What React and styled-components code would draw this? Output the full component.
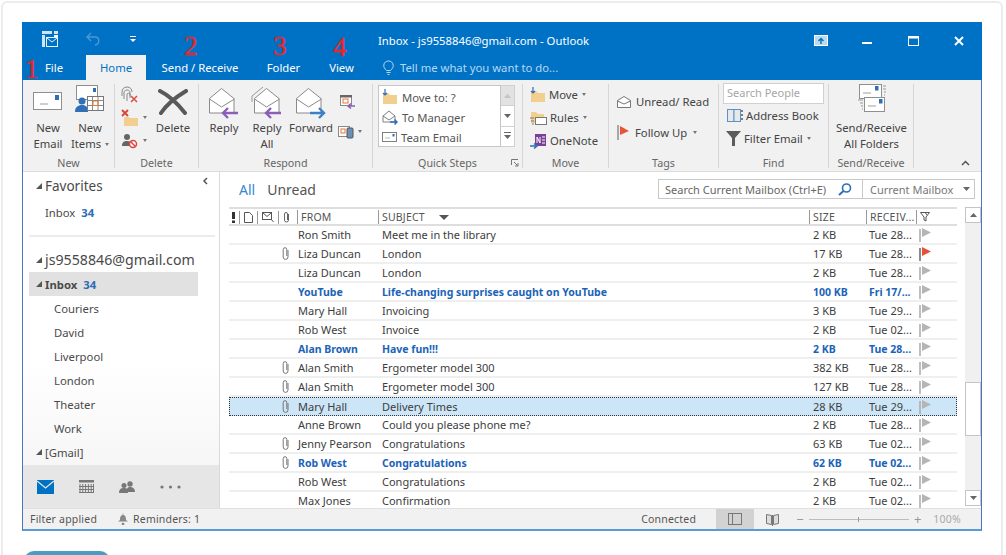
import React from "react";
import styled, { createGlobalStyle } from "styled-components";

const GlobalStyle = createGlobalStyle`
    html, body {
        margin: 0;
        height: 100%;
        background: #ffffff;
        overflow: hidden;
    }
    body {
        font-family: "Noto Sans", "Open Sans", sans-serif;
        font-size: 11px;
        color: #444444;
    }
`;

const blue = "#0072c6";
const unreadBlue = "#1b63b8";

const Card = styled.div`
    box-sizing: border-box;
    width: 1002px;
    height: 554px;
    margin: 1px 0 0 1px;
    padding: 19px 0 0 19px;
    border: 2px solid #ececec;
    border-bottom: none;
    border-radius: 6px 6px 0 0;
    overflow: hidden;
`;

const Window = styled.div`
    box-sizing: border-box;
    width: 960px;
    height: 509px;
    display: flex;
    flex-direction: column;
    border-left: 1px solid #4a74c4;
    border-right: 1px solid #4a74c4;
    border-bottom: 2px solid #5b9bd5;
    background: #ffffff;
`;

const PartialButton = styled.div`
    width: 86px;
    height: 20px;
    margin: 20px 0 0 2px;
    border-radius: 10px;
    background: #4a9cc0;
`;

/* title bar */

const TitleBar = styled.div`
    position: relative;
    height: 58px;
    margin: 0 -1px;
    background: ${blue};
    color: #ffffff;
    flex-shrink: 0;
`;

const TitleRow = styled.div`
    display: flex;
    align-items: center;
    height: 33px;
`;

const QuickAccess = styled.div`
    width: 356px;
    flex-shrink: 0;
    display: flex;
    align-items: center;
    padding-left: 19px;
    box-sizing: border-box;
    gap: 27px;
`;

const TitleText = styled.div`
    flex: 1;
    font-size: 11.3px;
    padding-top: 3px;
`;

const WindowButton = styled.div`
    width: 46px;
    display: flex;
    justify-content: center;
    padding-top: 4px;
`;

const TabRow = styled.div`
    display: flex;
    height: 25px;
    font-size: 11.3px;
`;

const Tab = styled.div`
    width: ${(p) => p.$w}px;
    display: flex;
    align-items: center;
    justify-content: center;
    background: ${(p) => (p.$active ? "#f1f1f1" : "transparent")};
    color: ${(p) => (p.$active ? blue : "#ffffff")};
`;

const TellMe = styled.div`
    display: flex;
    align-items: center;
    gap: 6px;
    padding-left: 13px;
    color: #b5d8f2;
    font-size: 11.3px;
`;

const Numeral = styled.span`
    position: absolute;
    left: ${(p) => p.$x}px;
    top: ${(p) => p.$y}px;
    font-family: "Liberation Serif", serif;
    font-size: 27px;
    line-height: 28px;
    color: #e8262a;
    -webkit-text-stroke: 0.4px #e8262a;
`;

/* ribbon */

const Ribbon = styled.div`
    display: flex;
    height: 92px;
    flex-shrink: 0;
    box-sizing: border-box;
    padding-top: 4px;
    background: #f1f1f1;
    border-bottom: 1px solid #dcdcdc;
`;

const Group = styled.div`
    box-sizing: border-box;
    width: ${(p) => p.$w}px;
    height: 84px;
    display: flex;
    flex-direction: column;
    border-right: 1px solid #d6d6d6;
    flex-shrink: 0;
`;

const GroupBody = styled.div`
    height: 71px;
    display: flex;
    padding-left: ${(p) => p.$pl || 0}px;
    padding-top: ${(p) => p.$pt || 0}px;
    box-sizing: border-box;
`;

const GroupLabel = styled.div`
    position: relative;
    height: 13px;
    line-height: 16px;
    text-align: center;
    font-size: 10.7px;
    color: #666666;
`;

const Launcher = styled.span`
    position: absolute;
    right: 3px;
    top: 4px;
    display: flex;
`;

const LargeButton = styled.div`
    width: ${(p) => p.$w}px;
    flex-shrink: 0;
    display: flex;
    flex-direction: column;
    align-items: center;
    text-align: center;
    line-height: 16px;
    font-size: 11.3px;
    color: #444444;
    white-space: nowrap;
`;

const LargeIcon = styled.div`
    height: 36px;
    width: 100%;
    display: flex;
    justify-content: center;
    align-items: ${(p) => p.$align || "center"};
`;

const Column = styled.div`
    width: ${(p) => (p.$w ? `${p.$w}px` : "auto")};
    flex-shrink: 0;
    display: flex;
    flex-direction: column;
    margin-top: ${(p) => p.$mt || 0}px;
`;

const SmallRow = styled.div`
    height: ${(p) => p.$h || 23}px;
    flex-shrink: 0;
    display: flex;
    align-items: center;
    gap: ${(p) => p.$gap ?? 3}px;
    padding-left: ${(p) => p.$pl || 0}px;
    font-size: 11.3px;
    color: #444444;
    white-space: nowrap;
`;

const Caret = styled.span`
    display: inline-block;
    vertical-align: middle;
    width: 0;
    height: 0;
    margin-left: 1px;
    border-left: 2.5px solid transparent;
    border-right: 2.5px solid transparent;
    border-top: 3px solid #777777;
`;

const QuickBox = styled.div`
    display: flex;
    margin: 1px 0 0 5px;
    height: 62px;
    box-sizing: border-box;
    width: 137px;
`;

const QuickList = styled.div`
    width: 123px;
    box-sizing: border-box;
    border: 1px solid #c6c6c6;
    background: #ffffff;
    padding: 1px 0 0 3px;
`;

const QuickRow = styled.div`
    height: 20px;
    display: flex;
    align-items: center;
    gap: 4px;
    font-size: 11.3px;
    color: #555555;
`;

const QuickScroll = styled.div`
    width: 14px;
    display: flex;
    flex-direction: column;
`;

const QuickScrollButton = styled.div`
    flex: 1;
    display: flex;
    align-items: center;
    justify-content: center;
    background: ${(p) => (p.$off ? "#e2e2e2" : "#ffffff")};
    border: 1px solid #d0d0d0;
    border-left: none;
    border-top: ${(p) => (p.$first ? "1px solid #d0d0d0" : "none")};
`;

const PeopleSearch = styled.div`
    box-sizing: border-box;
    width: 101px;
    height: 21px;
    margin: -1px 0 0 4px;
    padding-left: 3px;
    line-height: 18px;
    background: #ffffff;
    border: 1px solid #d0d0d0;
    font-size: 11px;
    color: #a6a6a6;
`;

const Collapse = styled.div`
    flex: 1;
    display: flex;
    justify-content: flex-end;
    align-items: flex-end;
    padding: 0 11px 5px 0;
`;

/* main */

const Main = styled.div`
    flex: 1;
    display: flex;
    min-height: 0;
`;

const Sidebar = styled.div`
    box-sizing: border-box;
    width: 197px;
    flex-shrink: 0;
    display: flex;
    flex-direction: column;
    border-right: 1px solid #dadada;
    background: linear-gradient(#ffffff 55%, #f3f3f3);
`;

const Folders = styled.div`
    position: relative;
    flex: 1;
    overflow: hidden;
`;

const Pin = styled.span`
    position: absolute;
    right: 11px;
    top: 5px;
    display: flex;
`;

const FolderRow = styled.div`
    height: ${(p) => p.$h || 24}px;
    display: flex;
    align-items: center;
    margin-left: ${(p) => (p.$selected ? 6 : 0)}px;
    margin-top: ${(p) => p.$mt || 0}px;
    width: ${(p) => (p.$selected ? "169px" : "auto")};
    padding-left: ${(p) => (p.$selected ? p.$indent - 6 : p.$indent)}px;
    background: ${(p) => (p.$selected ? "#e1e1e1" : "transparent")};
    font-size: ${(p) => p.$size || 11.3}px;
    font-weight: ${(p) => (p.$bold ? 700 : 400)};
    color: #4a4a4a;
    box-sizing: border-box;
`;

const Triangle = styled.span`
    width: 0;
    height: 0;
    margin-right: 3px;
    border-left: 6px solid transparent;
    border-bottom: 6px solid #555555;
`;

const Count = styled.span`
    margin-left: 6px;
    font-weight: 700;
    color: #2c6db5;
`;

const Divider = styled.div`
    height: 2px;
    margin: 9px 4px 0 6px;
    background: #ececec;
`;

const NavBar = styled.div`
    height: 43px;
    flex-shrink: 0;
    display: flex;
    align-items: center;
    background: #e6e6e6;
    padding-left: 14px;
    gap: 25px;
`;

const MailPane = styled.div`
    flex: 1;
    min-width: 0;
    display: flex;
    flex-direction: column;
    padding-left: 9px;
`;

const PaneTools = styled.div`
    height: 35px;
    flex-shrink: 0;
    display: flex;
    align-items: center;
    justify-content: space-between;
    padding: 0 6px 0 10px;
`;

const FilterTabs = styled.div`
    display: flex;
    gap: 12px;
    font-size: 14px;
`;

const FilterTab = styled.span`
    color: ${(p) => (p.$active ? "#3a86cf" : "#555555")};
`;

const SearchBar = styled.div`
    display: flex;
    height: 20px;
    box-sizing: border-box;
    border: 1px solid #c8c8c8;
    margin-top: -1px;
`;

const SearchField = styled.div`
    width: 204px;
    display: flex;
    align-items: center;
    justify-content: space-between;
    padding: 0 10px 0 6px;
    box-sizing: border-box;
    border-right: 1px solid #c8c8c8;
    font-size: 11px;
    color: #666666;
`;

const ScopeField = styled.div`
    width: 111px;
    display: flex;
    align-items: center;
    justify-content: space-between;
    padding: 0 4px 0 7px;
    box-sizing: border-box;
    font-size: 11px;
    color: #777777;
`;

const ListArea = styled.div`
    flex: 1;
    min-height: 0;
    display: flex;
    gap: 8px;
`;

const MailList = styled.div`
    width: 728px;
    overflow: hidden;
`;

const columns = "68px 81px 431px 57px 50px 41px";

const HeaderRow = styled.div`
    display: grid;
    grid-template-columns: ${columns};
    box-sizing: border-box;
    height: 19px;
    border-top: 2px solid #dedede;
    border-bottom: 2px solid #dedede;
    font-size: 10.5px;
    color: #555555;
`;

const HeaderCell = styled.div`
    display: flex;
    align-items: center;
    gap: ${(p) => p.$gap || 0}px;
    padding-left: 3px;
    letter-spacing: 0.2px;
    white-space: nowrap;
    border-left: ${(p) => (p.$first ? "none" : "1px solid #999999")};
    margin: 1px 0;
`;

const IconDivider = styled.span`
    width: 1px;
    height: 13px;
    background: #999999;
`;

const MailRow = styled.div`
    display: grid;
    grid-template-columns: ${columns};
    height: 19px;
    box-sizing: border-box;
    align-items: center;
    border-bottom: ${(p) => (p.$selected ? "none" : "2px solid #efefef")};
    outline: ${(p) => (p.$selected ? "1px dotted #333333" : "none")};
    outline-offset: -1px;
    background: ${(p) => (p.$selected ? "#cce5f7" : "transparent")};
    font-size: ${(p) => (p.$unread ? 10.5 : 11)}px;
    font-weight: ${(p) => (p.$unread ? 700 : 400)};
    color: ${(p) => (p.$unread ? unreadBlue : "#3d3d3d")};
`;

const AttachCell = styled.div`
    display: flex;
    justify-content: flex-end;
    padding-right: 7px;
`;

const MailCell = styled.div`
    padding-left: ${(p) => p.$pl}px;
    white-space: nowrap;
    overflow: hidden;
`;

const FlagCell = styled.div`
    display: flex;
    padding-left: 3px;
`;

const ScrollBar = styled.div`
    width: 16px;
    height: 299px;
    background: #f0f0f0;
    display: flex;
    flex-direction: column;
`;

const ScrollButton = styled.div`
    height: 16px;
    box-sizing: border-box;
    background: #ffffff;
    border: 1px solid #c4c4c4;
    display: flex;
    align-items: center;
    justify-content: center;
    margin-top: ${(p) => p.$mt || 0}px;
`;

const ScrollThumb = styled.div`
    box-sizing: border-box;
    height: 54px;
    margin-top: 159px;
    background: #ffffff;
    border: 1px solid #c4c4c4;
`;

/* status bar */

const StatusBar = styled.div`
    box-sizing: border-box;
    height: 21px;
    flex-shrink: 0;
    display: flex;
    align-items: center;
    background: #f1f1f1;
    border-top: 1px solid #e0e0e0;
    font-size: 10.5px;
    color: #555555;
`;

const StatusText = styled.span`
    display: flex;
    align-items: center;
    gap: 4px;
    margin-left: ${(p) => p.$ml}px;
    width: ${(p) => (p.$w ? `${p.$w}px` : "auto")};
    color: ${(p) => p.$color || "#555555"};
    letter-spacing: 0.2px;
`;

const ViewButton = styled.div`
    height: 100%;
    width: ${(p) => p.$w}px;
    display: flex;
    align-items: center;
    justify-content: center;
    background: ${(p) => (p.$active ? "#d2d2d2" : "transparent")};
`;

const ZoomSlider = styled.div`
    display: flex;
    align-items: center;
    width: 100px;
    height: 1px;
    margin: 0 5px;
    background: #bdbdbd;
    justify-content: center;
`;

const ZoomTick = styled.span`
    width: 1px;
    height: 5px;
    background: #999999;
`;

const ZoomSign = styled.span`
    font-size: 13px;
    color: #999999;
    line-height: 13px;
`;

const SortArrow = styled.span`
    width: 0;
    height: 0;
    margin-left: 14px;
    border-left: 5px solid transparent;
    border-right: 5px solid transparent;
    border-top: 5px solid #555555;
`;

const IconSlot = styled.span`
    display: flex;
    margin-left: ${(p) => p.$ml || 0}px;
    margin-top: ${(p) => p.$mt || 0}px;
`;

/* icons */

const Svg = ({ w, h, children }) => (
    <svg width={w} height={h} viewBox={`0 0 ${w} ${h}`} fill="none" style={{ display: "block", flexShrink: 0 }}>
        {children}
    </svg>
);

const AppIcon = () => (
    <Svg w={18} h={18}>
        <path d="M1 1h10v3H1zM13 1h4v3h-4zM1 5h3v12H1z" fill="#cfe4f5" />
        <rect x="5.5" y="7.5" width="11" height="9" fill="none" stroke="#e8f2fa" />
        <path d="M6 8l5 4 5-4" stroke="#e8f2fa" />
        <path d="M13 5h4v2h-4z" fill="#ffffff" />
    </Svg>
);

const UndoIcon = () => (
    <Svg w={16} h={14}>
        <path d="M5 1L1 5l4 4M1 5h8c5 0 5 7 0 8" stroke="#4c97d6" strokeWidth="1.4" />
    </Svg>
);

const QatMenu = () => (
    <Svg w={8} h={8}>
        <path d="M1 1h6v1H1z" fill="#fff" />
        <path d="M1 4h6L4 7z" fill="#fff" />
    </Svg>
);

const RestoreRibbon = () => (
    <Svg w={14} h={11}>
        <rect x="0.5" y="0.5" width="13" height="10" fill="#bcd9ef" stroke="#fff" />
        <path d="M7 9V4M4.5 6L7 3.5 9.5 6" stroke={blue} strokeWidth="1.4" />
    </Svg>
);

const MinimizeIcon = () => <Svg w={10} h={10}><path d="M0 6h10v2H0z" fill="#fff" /></Svg>;
const MaximizeIcon = () => <Svg w={11} h={10}><rect x="0.5" y="0.5" width="10" height="9" stroke="#fff" /><path d="M0 0h11v2.5H0z" fill="#fff" /></Svg>;
const CloseIcon = () => <Svg w={10} h={10}><path d="M1 1l8 8M9 1l-8 8" stroke="#fff" strokeWidth="2" /></Svg>;

const BulbIcon = () => (
    <Svg w={11} h={15}>
        <path d="M3.5 10.5C1.5 8.5 .5 7 .8 5 1.2 2.4 3 1 5.5 1s4.3 1.4 4.7 4c.3 2-.7 3.5-2.7 5.5z" stroke="#b5d8f2" />
        <path d="M3.5 12.5h4M4.5 14.5h2" stroke="#b5d8f2" />
    </Svg>
);

const NewEmailIcon = () => (
    <Svg w={30} h={20}>
        <rect x="0.5" y="0.5" width="28" height="17" fill="#fff" stroke="#8f8f8f" />
        <rect x="22" y="3" width="4" height="5" fill="#2e6fb7" />
        <path d="M7 12h8" stroke="#cfcfcf" strokeWidth="2" />
    </Svg>
);

const NewItemsIcon = () => (
    <Svg w={30} h={30}>
        <rect x="1.5" y="1.5" width="21" height="14" fill="#fff" stroke="#8f8f8f" />
        <rect x="18" y="4" width="3" height="4" fill="#2e6fb7" />
        <circle cx="7" cy="17" r="3.5" fill="#2e6fb7" />
        <path d="M0 28c0-5 3-7 7-7s6 2 6 7z" fill="#2e6fb7" />
        <rect x="12.5" y="12.5" width="16" height="14" fill="#fff" stroke="#777" />
        <path d="M12.5 16.5h16M17.5 13v13M23 13v13M13 21.5h15" stroke="#888" />
        <rect x="18" y="17" width="5" height="4.5" fill="none" stroke="#e2792c" />
    </Svg>
);

const CleanIcon = () => (
    <Svg w={18} h={17}>
        <path d="M1 10V6c0-3 2-5 5-5s5 2 5 5" stroke="#888" />
        <path d="M3 13V7c0-2 1-3 3-3s3 1 3 3v5" stroke="#888" />
        <path d="M6 15V8c0-1 3-1 3 0v2" stroke="#888" />
        <path d="M10 10l6 6M16 10l-6 6" stroke="#d9534a" strokeWidth="1.6" />
    </Svg>
);

const JunkFolderIcon = () => (
    <Svg w={18} h={18}>
        <path d="M3 8h5l1 1h8v8H3z" fill="#f3cf8f" />
        <path d="M1 1l6 6M7 1L1 7" stroke="#d9483b" strokeWidth="2" />
    </Svg>
);

const BlockIcon = () => (
    <Svg w={18} h={16}>
        <circle cx="6" cy="4" r="3" fill="#666" />
        <path d="M1 13c0-4 2-5 5-5s4 1 4 3v2z" fill="#666" />
        <circle cx="12" cy="11" r="3.5" fill="#fff" stroke="#d9483b" strokeWidth="1.5" />
        <path d="M9.5 8.5l5 5" stroke="#d9483b" strokeWidth="1.5" />
    </Svg>
);

const DeleteIcon = () => (
    <Svg w={30} h={26}>
        <path d="M2 2c8 4 18 13 25 22M28 2C18 8 9 15 3 24" stroke="#595959" strokeWidth="4" strokeLinecap="round" />
    </Svg>
);

const OpenEnvelope = ({ arrow, all, forward }) => {
    const left = all ? 3.5 : 1.5;
    return (
        <Svg w={32} h={33}>
            {all && <path d="M1 16V10L12 1" stroke="#999" />}
            <path d={`M${left} 12.5L${left + 12} 2.5l12.5 10V27H${left}z`} fill="#fff" stroke="#8a8a8a" />
            <path d={`M${left} 13L${left + 12} 21 ${left + 25} 13`} stroke="#8a8a8a" />
            {forward ? (
                <path d="M15 27h14M24 22l5 5-5 5" stroke={arrow} strokeWidth="2.4" />
            ) : (
                <path d="M30 27H15M20 22l-5 5 5 5" stroke={arrow} strokeWidth="2.4" />
            )}
        </Svg>
    );
};

const MeetingIcon = () => (
    <Svg w={15} h={14}>
        <rect x="0.5" y="0.5" width="11" height="10" fill="#fff" stroke="#888" />
        <path d="M0 0h12v2.5H0z" fill="#666" />
        <rect x="3" y="4" width="5" height="4" stroke="#e2792c" />
        <path d="M15 11H8M11 8.5L8 11l3 2.5" stroke="#8b5fb8" strokeWidth="1.5" />
    </Svg>
);

const MoreRespondIcon = () => (
    <Svg w={16} h={15}>
        <rect x="0.5" y="2.5" width="11" height="10" fill="#fff" stroke="#888" />
        <rect x="3" y="5" width="4" height="4" stroke="#e2792c" />
        <rect x="9" y="4" width="6" height="10" rx="1" fill="#6c8fb7" stroke="#555" />
    </Svg>
);

const FolderArrowIcon = () => (
    <Svg w={16} h={16}>
        <path d="M1 4h5l2 2h7v9H1z" fill="#f3cf8f" />
        <path d="M3 0v6M1 4l2 2 2-2" stroke="#2e6fb7" strokeWidth="1.2" />
    </Svg>
);

const ManagerIcon = () => (
    <Svg w={16} h={15}>
        <path d="M1 6l6-5 6 5v6H1z" fill="#fff" stroke="#808080" />
        <path d="M1 6l6 4 6-4" stroke="#808080" />
        <path d="M8 12h7M12.5 9.5L15 12l-2.5 2.5" stroke="#2e6fb7" strokeWidth="1.5" />
    </Svg>
);

const TeamEmailIcon = () => (
    <Svg w={15} h={12}>
        <rect x="0.5" y="1.5" width="14" height="9" fill="#fff" stroke="#808080" />
        <rect x="10.5" y="3" width="2" height="2.5" fill="#2e6fb7" />
        <path d="M3 7h5" stroke="#bbb" />
    </Svg>
);

const RulesIcon = () => (
    <Svg w={17} h={17}>
        <path d="M1 3h5l2 2h6v9H1z" fill="#f3cf8f" />
        <rect x="5.5" y="8.5" width="11" height="7" fill="#fff" stroke="#777" />
        <path d="M0 9h4M1 12h3M2 15h2" stroke="#777" />
    </Svg>
);

const OneNoteIcon = () => (
    <Svg w={17} h={16}>
        <rect x="5" y="1" width="11" height="12" fill="#7b3f98" />
        <path d="M7 10V4l3 6V4M12 4h3M12 7h3M12 10h3" stroke="#fff" />
        <path d="M0 13h6M4 10.5L7 13l-3 2.5" stroke="#2e6fb7" strokeWidth="1.5" />
    </Svg>
);

const UnreadIcon = () => (
    <Svg w={14} h={12}>
        <path d="M.5 4.5L7 .5l6.5 4v7H.5z" fill="#fff" stroke="#777" />
        <path d="M.5 5L7 8l6.5-3" stroke="#777" />
    </Svg>
);

const RibbonFlag = () => (
    <Svg w={13} h={15}>
        <path d="M1 0v15" stroke="#888" strokeWidth="1.4" />
        <path d="M3 1l9 5-9 4z" fill="#e8543a" />
    </Svg>
);

const BookIcon = () => (
    <Svg w={16} h={13}>
        <rect x="0.5" y="0.5" width="6.5" height="12" fill="#e8e8e8" stroke="#5a93c9" />
        <rect x="7" y="0.5" width="6.5" height="12" fill="#e8e8e8" stroke="#5a93c9" />
        <path d="M15 1v2M15 5v2M15 9v2" stroke="#555" strokeWidth="1.5" />
    </Svg>
);

const FunnelIcon = () => (
    <Svg w={15} h={15}>
        <path d="M0 0h15L9 7v8H6V7z" fill="#5c5c5c" />
    </Svg>
);

const SendAllIcon = () => (
    <Svg w={30} h={28}>
        <rect x="2.5" y="0.5" width="22" height="14" fill="#fff" stroke="#8f8f8f" />
        <rect x="18" y="2" width="3.5" height="4.5" fill="#2e6fb7" />
        <path d="M6 9h8" stroke="#cfcfcf" strokeWidth="2" />
        <path d="M26 2h3M26 5h3M27 8h2M27 11h1" stroke="#999" />
        <rect x="7.5" y="13.5" width="20" height="14" fill="#fff" stroke="#8f8f8f" />
        <rect x="22" y="15" width="3.5" height="4.5" fill="#2e6fb7" />
        <path d="M11 22h8" stroke="#cfcfcf" strokeWidth="2" />
        <path d="M1 16h5M3 19h3M4 22h2M5 25h1" stroke="#999" />
    </Svg>
);

const ChevronUp = () => <Svg w={9} h={6}><path d="M1 5l3.5-3.5L8 5" stroke="#555" strokeWidth="1.5" /></Svg>;
const PinIcon = () => <Svg w={6} h={8}><path d="M5 1L2 4l3 3" stroke="#555" strokeWidth="1.5" /></Svg>;
const MiniLauncher = () => <Svg w={8} h={8}><path d="M.5 6V.5H7M3 3l4 4M7 4v3H4" stroke="#777" /></Svg>;
const SmallTriangleUp = ({ color = "#666" }) => <Svg w={7} h={4}><path d="M0 4l3.5-4L7 4z" fill={color} /></Svg>;
const SmallTriangleDown = ({ color = "#666" }) => <Svg w={7} h={4}><path d="M0 0l3.5 4L7 0z" fill={color} /></Svg>;
const QuickMore = () => <Svg w={7} h={8}><path d="M0 0h7v1H0z" fill="#666" /><path d="M0 3h7L3.5 7z" fill="#666" /></Svg>;

const MagnifierIcon = () => (
    <Svg w={14} h={13}>
        <circle cx="8.5" cy="5" r="4" stroke="#2e6fb7" strokeWidth="1.6" />
        <path d="M5.5 8L1 12" stroke="#2e6fb7" strokeWidth="2" />
    </Svg>
);

const NavMail = () => (
    <Svg w={17} h={14}>
        <path d="M0 0h17v14H0z" fill={blue} />
        <path d="M0 1l8.5 7L17 1" stroke="#e6e6e6" strokeWidth="1.3" />
    </Svg>
);

const NavCalendar = () => (
    <Svg w={15} h={13}>
        <path d="M0 0h15v2.5H0z" fill="#777" />
        <path d="M1 4v9M3.8 4v9M6.6 4v9M9.4 4v9M12.2 4v9M14.5 4v9M0 6.5h15M0 9.5h15M0 12.5h15" stroke="#777" />
    </Svg>
);

const NavPeople = () => (
    <Svg w={16} h={12}>
        <circle cx="11" cy="3" r="2.7" fill="#777" />
        <path d="M7.5 11c0-4 1.5-5 3.5-5s5 1 5 5z" fill="#777" />
        <circle cx="5" cy="4.5" r="2.5" fill="#777" />
        <path d="M0 12c0-4 2-5 5-5s4 1 4 5z" fill="#777" />
    </Svg>
);

const NavMore = () => (
    <Svg w={21} h={4}>
        <circle cx="2" cy="2" r="1.6" fill="#777" />
        <circle cx="10.5" cy="2" r="1.6" fill="#777" />
        <circle cx="19" cy="2" r="1.6" fill="#777" />
    </Svg>
);

const ClipIcon = ({ color = "#777" }) => (
    <Svg w={8} h={15}>
        <path d="M6 4v7a2.4 2.4 0 0 1-4.8 0V3.5a1.8 1.8 0 0 1 3.6 0V10" stroke={color} />
    </Svg>
);

const SmallClipIcon = () => (
    <Svg w={7} h={12}>
        <path d="M5.5 3v6a2 2 0 0 1-4 0V3a1.5 1.5 0 0 1 3 0v6" stroke="#666" />
    </Svg>
);

const DocIcon = () => <Svg w={9} h={11}><path d="M.5.5h5l3 3v7h-8z" stroke="#555" /></Svg>;
const HeaderEnvelopeIcon = () => (
    <Svg w={12} h={11}>
        <rect x="0.5" y="0.5" width="9" height="7" stroke="#555" />
        <path d="M.5.5l4.5 4 4.5-4M9 7l2.5 3" stroke="#555" />
    </Svg>
);
const BangIcon = () => <Svg w={3} h={11}><path d="M0 0h3v7H0zM0 8.5h3V11H0z" fill="#333" /></Svg>;
const FilterHeaderIcon = () => <Svg w={10} h={10}><path d="M.5.5h9L6 5v4L4 8V5zM5 .5L7 3" stroke="#555" /></Svg>;

const FlagIcon = ({ red }) => (
    <Svg w={14} h={14}>
        <path d="M1 1v13" stroke={red ? "#666" : "#aaaaaa"} strokeWidth="1.5" />
        <path d="M3 0l9 4.5L3 9z" fill={red ? "#e8503a" : "#b5b5b5"} />
    </Svg>
);

const BellIcon = () => (
    <Svg w={12} h={12}>
        <path d="M3 7c0-3 .5-5 3-5s3 2 3 5l2 1.5H1z" fill="#888" />
        <path d="M6 0v2M5 10h2v2H5z" fill="#888" stroke="#888" strokeWidth=".5" />
    </Svg>
);

const NormalViewIcon = () => <Svg w={14} h={12}><rect x="0.5" y="0.5" width="13" height="11" stroke="#777" /><path d="M4.5 1v10" stroke="#777" /></Svg>;
const ReadingViewIcon = () => <Svg w={13} h={13}><path d="M.5 1.5l5 1v9l-5-1zM12.5 1.5l-5 1v9l5-1z" fill="#ddd" stroke="#777" /><path d="M6.5 2v11" stroke="#777" /></Svg>;

const mails = [
    { from: "Ron Smith", subject: "Meet me in the library", size: "2 KB", date: "Tue 28..." },
    { from: "Liza Duncan", subject: "London", size: "17 KB", date: "Tue 28...", clip: true, red: true },
    { from: "Liza Duncan", subject: "London", size: "2 KB", date: "Tue 28..." },
    { from: "YouTube", subject: "Life-changing surprises caught on YouTube", size: "100 KB", date: "Fri 17/...", unread: true },
    { from: "Mary Hall", subject: "Invoicing", size: "3 KB", date: "Tue 29..." },
    { from: "Rob West", subject: "Invoice", size: "2 KB", date: "Tue 02..." },
    { from: "Alan Brown", subject: "Have fun!!!", size: "2 KB", date: "Tue 28...", unread: true },
    { from: "Alan Smith", subject: "Ergometer model 300", size: "382 KB", date: "Tue 28...", clip: true },
    { from: "Alan Smith", subject: "Ergometer model 300", size: "127 KB", date: "Tue 28...", clip: true },
    { from: "Mary Hall", subject: "Delivery Times", size: "28 KB", date: "Tue 29...", clip: true, selected: true },
    { from: "Anne Brown", subject: "Could you please phone me?", size: "2 KB", date: "Tue 28..." },
    { from: "Jenny Pearson", subject: "Congratulations", size: "63 KB", date: "Tue 02...", clip: true },
    { from: "Rob West", subject: "Congratulations", size: "62 KB", date: "Tue 02...", clip: true, unread: true },
    { from: "Rob West", subject: "Congratulations", size: "2 KB", date: "Tue 02..." },
    { from: "Max Jones", subject: "Confirmation", size: "2 KB", date: "Tue 02..." },
];

const subFolders = ["Couriers", "David", "Liverpool", "London", "Theater", "Work"];

const TitleArea = () => (
    <TitleBar>
        <TitleRow>
            <QuickAccess>
                <AppIcon />
                <UndoIcon />
                <QatMenu />
            </QuickAccess>
            <TitleText>Inbox - js9558846@gmail.com - Outlook</TitleText>
            <WindowButton><RestoreRibbon /></WindowButton>
            <WindowButton><MinimizeIcon /></WindowButton>
            <WindowButton><MaximizeIcon /></WindowButton>
            <WindowButton><CloseIcon /></WindowButton>
        </TitleRow>
        <TabRow>
            <Tab $w={64}>File</Tab>
            <Tab $w={60} $active>Home</Tab>
            <Tab $w={108}>Send / Receive</Tab>
            <Tab $w={59}>Folder</Tab>
            <Tab $w={57}>View</Tab>
            <TellMe><BulbIcon />Tell me what you want to do...</TellMe>
        </TabRow>
        <Numeral $x={3} $y={33}>1</Numeral>
        <Numeral $x={162} $y={10}>2</Numeral>
        <Numeral $x={251} $y={10}>3</Numeral>
        <Numeral $x={311} $y={11}>4</Numeral>
    </TitleBar>
);

const RibbonArea = () => (
    <Ribbon>
        <Group $w={92}>
            <GroupBody $pl={2}>
                <LargeButton $w={46}>
                    <LargeIcon><NewEmailIcon /></LargeIcon>
                    <span>New<br />Email</span>
                </LargeButton>
                <LargeButton $w={38}>
                    <LargeIcon $align="flex-start"><NewItemsIcon /></LargeIcon>
                    <span>New<br />Items <Caret /></span>
                </LargeButton>
            </GroupBody>
            <GroupLabel>New</GroupLabel>
        </Group>
        <Group $w={84}>
            <GroupBody $pl={6}>
                <Column $w={31} $mt={-1}>
                    <SmallRow><CleanIcon /></SmallRow>
                    <SmallRow><JunkFolderIcon /><Caret /></SmallRow>
                    <SmallRow><BlockIcon /><Caret /></SmallRow>
                </Column>
                <LargeButton $w={42}>
                    <LargeIcon><DeleteIcon /></LargeIcon>
                    <span>Delete</span>
                </LargeButton>
            </GroupBody>
            <GroupLabel>Delete</GroupLabel>
        </Group>
        <Group $w={174}>
            <GroupBody $pl={4}>
                <LargeButton $w={42}>
                    <LargeIcon><OpenEnvelope arrow="#8b5fb8" /></LargeIcon>
                    <span>Reply</span>
                </LargeButton>
                <LargeButton $w={44}>
                    <LargeIcon><OpenEnvelope arrow="#8b5fb8" all /></LargeIcon>
                    <span>Reply<br />All</span>
                </LargeButton>
                <LargeButton $w={44}>
                    <LargeIcon><OpenEnvelope arrow="#3f7fc4" forward /></LargeIcon>
                    <span>Forward</span>
                </LargeButton>
                <Column $w={30}>
                    <SmallRow $h={34}><IconSlot $ml={7} $mt={2}><MeetingIcon /></IconSlot></SmallRow>
                    <SmallRow $h={26}><IconSlot $ml={5}><MoreRespondIcon /></IconSlot><Caret /></SmallRow>
                </Column>
            </GroupBody>
            <GroupLabel>Respond</GroupLabel>
        </Group>
        <Group $w={150}>
            <GroupBody>
                <QuickBox>
                    <QuickList>
                        <QuickRow><FolderArrowIcon />Move to: ?</QuickRow>
                        <QuickRow><ManagerIcon />To Manager</QuickRow>
                        <QuickRow><TeamEmailIcon />Team Email</QuickRow>
                    </QuickList>
                    <QuickScroll>
                        <QuickScrollButton $off $first><SmallTriangleUp color="#c4c4c4" /></QuickScrollButton>
                        <QuickScrollButton><SmallTriangleDown /></QuickScrollButton>
                        <QuickScrollButton><QuickMore /></QuickScrollButton>
                    </QuickScroll>
                </QuickBox>
            </GroupBody>
            <GroupLabel>Quick Steps<Launcher><MiniLauncher /></Launcher></GroupLabel>
        </Group>
        <Group $w={86}>
            <GroupBody $pl={7}>
                <Column $mt={-1}>
                    <SmallRow><FolderArrowIcon />Move<Caret /></SmallRow>
                    <SmallRow><RulesIcon />Rules<Caret /></SmallRow>
                    <SmallRow><OneNoteIcon />OneNote</SmallRow>
                </Column>
            </GroupBody>
            <GroupLabel>Move</GroupLabel>
        </Group>
        <Group $w={110}>
            <GroupBody $pl={8} $pt={2}>
                <Column>
                    <SmallRow $h={31} $gap={5}><UnreadIcon />Unread/ Read</SmallRow>
                    <SmallRow $h={31} $gap={5}><RibbonFlag />Follow Up<Caret /></SmallRow>
                </Column>
            </GroupBody>
            <GroupLabel>Tags</GroupLabel>
        </Group>
        <Group $w={110}>
            <GroupBody>
                <Column>
                    <PeopleSearch>Search People</PeopleSearch>
                    <SmallRow $pl={8}><BookIcon />Address Book</SmallRow>
                    <SmallRow $pl={7}><FunnelIcon />Filter Email<Caret /></SmallRow>
                </Column>
            </GroupBody>
            <GroupLabel>Find</GroupLabel>
        </Group>
        <Group $w={85}>
            <GroupBody>
                <LargeButton $w={85}>
                    <LargeIcon $align="flex-start"><SendAllIcon /></LargeIcon>
                    <span>Send/Receive<br />All Folders</span>
                </LargeButton>
            </GroupBody>
            <GroupLabel>Send/Receive</GroupLabel>
        </Group>
        <Collapse><ChevronUp /></Collapse>
    </Ribbon>
);

const SidebarArea = () => (
    <Sidebar>
        <Folders>
            <Pin><PinIcon /></Pin>
            <FolderRow $indent={13} $size={13.5} $h={27}><Triangle />Favorites</FolderRow>
            <FolderRow $indent={22} $h={27}>Inbox<Count>34</Count></FolderRow>
            <Divider />
            <FolderRow $indent={13} $size={14.2} $h={25} $mt={10}><Triangle />js9558846@gmail.com</FolderRow>
            <FolderRow $indent={13} $selected $bold><Triangle />Inbox<Count>34</Count></FolderRow>
            {subFolders.map((name) => (
                <FolderRow key={name} $indent={31}>{name}</FolderRow>
            ))}
            <FolderRow $indent={13}><Triangle />[Gmail]</FolderRow>
        </Folders>
        <NavBar>
            <NavMail />
            <NavCalendar />
            <NavPeople />
            <NavMore />
        </NavBar>
    </Sidebar>
);

const MailPaneArea = () => (
    <MailPane>
        <PaneTools>
            <FilterTabs>
                <FilterTab $active>All</FilterTab>
                <FilterTab>Unread</FilterTab>
            </FilterTabs>
            <SearchBar>
                <SearchField>Search Current Mailbox (Ctrl+E)<MagnifierIcon /></SearchField>
                <ScopeField>Current Mailbox<SmallTriangleDown /></ScopeField>
            </SearchBar>
        </PaneTools>
        <ListArea>
            <MailList>
                <HeaderRow>
                    <HeaderCell $first $gap={4}>
                        <BangIcon /><IconDivider /><DocIcon /><IconDivider /><HeaderEnvelopeIcon /><IconDivider /><SmallClipIcon />
                    </HeaderCell>
                    <HeaderCell>FROM</HeaderCell>
                    <HeaderCell>SUBJECT<SortArrow /></HeaderCell>
                    <HeaderCell>SIZE</HeaderCell>
                    <HeaderCell>RECEIV...</HeaderCell>
                    <HeaderCell><FilterHeaderIcon /></HeaderCell>
                </HeaderRow>
                {mails.map((m, i) => (
                    <MailRow key={i} $unread={m.unread} $selected={m.selected}>
                        <AttachCell>{m.clip && <ClipIcon />}</AttachCell>
                        <MailCell $pl={1}>{m.from}</MailCell>
                        <MailCell $pl={4}>{m.subject}</MailCell>
                        <MailCell $pl={4}>{m.size}</MailCell>
                        <MailCell $pl={3}>{m.date}</MailCell>
                        <FlagCell><FlagIcon red={m.red} /></FlagCell>
                    </MailRow>
                ))}
            </MailList>
            <ScrollBar>
                <ScrollButton><SmallTriangleUp /></ScrollButton>
                <ScrollThumb />
                <ScrollButton $mt={54}><SmallTriangleDown /></ScrollButton>
            </ScrollBar>
        </ListArea>
    </MailPane>
);

const StatusArea = () => (
    <StatusBar>
        <StatusText $ml={7}>Filter applied</StatusText>
        <StatusText $ml={20}><BellIcon />Reminders: 1</StatusText>
        <StatusText $ml={441} $w={75}>Connected</StatusText>
        <ViewButton $w={38} $active><NormalViewIcon /></ViewButton>
        <ViewButton $w={36}><ReadingViewIcon /></ViewButton>
        <StatusText $ml={6}><ZoomSign>−</ZoomSign></StatusText>
        <ZoomSlider><ZoomTick /></ZoomSlider>
        <ZoomSign>+</ZoomSign>
        <StatusText $ml={12} $color="#aaaaaa">100%</StatusText>
    </StatusBar>
);

const App = () => (
    <>
        <GlobalStyle />
        <Card>
            <Window>
                <TitleArea />
                <RibbonArea />
                <Main>
                    <SidebarArea />
                    <MailPaneArea />
                </Main>
                <StatusArea />
            </Window>
            <PartialButton />
        </Card>
    </>
);

export default App;
